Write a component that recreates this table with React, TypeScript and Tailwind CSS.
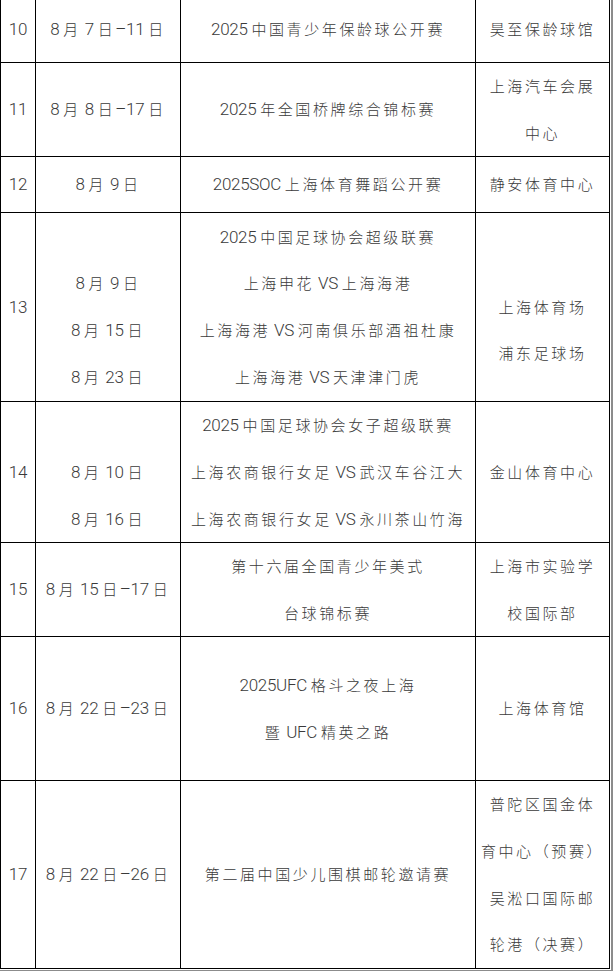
const cjkRe = /([\u3000-\u9fff\uff00-\uffef]+)/;

// split a line into latin / cjk runs, cjk runs get their own size and spacing
const Line = ({text}: {text: string}) => {
    if (text === "") return <div className="h-[46.75px]"></div>;
    const parts = text.split(cjkRe).filter((p) => p !== "");
    return (
        <div className="h-[46.75px] leading-[46.75px] whitespace-nowrap">
            {parts.map((p, i) =>
                cjkRe.test(p)
                    ? <span key={i} className="text-[15px] font-light tracking-[2.6px] font-['Noto_Sans_CJK_SC',sans-serif]">{p}</span>
                    : <span key={i} className="text-[17px] font-light tracking-[-0.3px] font-['Roboto','Liberation_Sans',sans-serif]">{p}</span>
            )}
        </div>
    );
};

const rows = [
    {no: "10", h: "h-[67px]", date: ["8 月 7 日–11 日"], name: ["2025 中国青少年保龄球公开赛"], place: ["昊至保龄球馆"]},
    {no: "11", h: "h-[94px]", date: ["8 月 8 日–17 日"], name: ["2025 年全国桥牌综合锦标赛"], place: ["上海汽车会展", "中心"]},
    {no: "12", h: "h-[56px]", date: ["8 月 9 日"], name: ["2025SOC 上海体育舞蹈公开赛"], place: ["静安体育中心"]},
    {
        no: "13", h: "h-[189px]",
        date: ["", "8 月 9 日", "8 月 15 日", "8 月 23 日"],
        name: ["2025 中国足球协会超级联赛", "上海申花 VS 上海海港", "上海海港 VS 河南俱乐部酒祖杜康", "上海海港 VS 天津津门虎"],
        place: ["", "上海体育场", "浦东足球场"],
    },
    {
        no: "14", h: "h-[141px]",
        date: ["", "8 月 10 日", "8 月 16 日"],
        name: ["2025 中国足球协会女子超级联赛", "上海农商银行女足 VS 武汉车谷江大", "上海农商银行女足 VS 永川茶山竹海"],
        place: ["金山体育中心"],
    },
    {no: "15", h: "h-[94px]", date: ["8 月 15 日–17 日"], name: ["第十六届全国青少年美式", "台球锦标赛"], place: ["上海市实验学", "校国际部"]},
    {no: "16", h: "h-[144px]", date: ["8 月 22 日–23 日"], name: ["2025UFC 格斗之夜上海", "暨 UFC 精英之路"], place: ["上海体育馆"]},
    {
        no: "17", h: "h-[188px]",
        date: ["8 月 22 日–26 日"],
        name: ["第二届中国少儿围棋邮轮邀请赛"],
        place: ["普陀区国金体", "育中心（预赛）", "吴淞口国际邮", "轮港（决赛）"],
    },
];

const Cell = ({lines}: {lines: string[]}) => (
    <div className="border-r border-black flex flex-col items-center justify-center text-center">
        {lines.map((l, i) => <Line key={i} text={l}/>)}
    </div>
);

const App = () => {
    return (
        <div className="w-[613px] h-[971px] overflow-hidden bg-white text-[#3a3a3a]">
            <div className="w-[613px] -mt-[4px] pr-px pb-px border-r-2 border-b-2 border-[#8c8c8c]">
                <div className="border-l border-black">
                    {rows.map((r) => (
                        <div key={r.no} className={`grid grid-cols-[35px_145px_295px_134px] border-b border-black ${r.h}`}>
                            <Cell lines={[r.no]}/>
                            <Cell lines={r.date}/>
                            <Cell lines={r.name}/>
                            <Cell lines={r.place}/>
                        </div>
                    ))}
                </div>
            </div>
        </div>
    );
};

export default App;
